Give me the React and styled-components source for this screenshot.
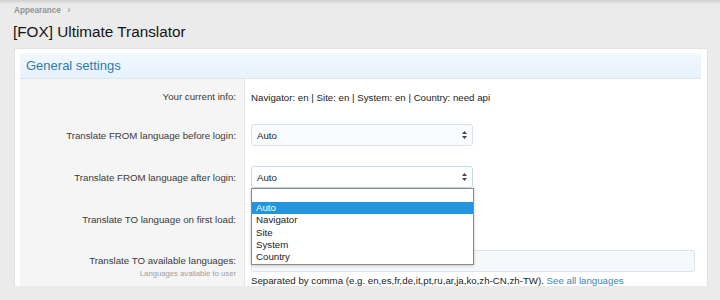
import React from "react";
import styled, { createGlobalStyle } from "styled-components";

const GlobalStyle = createGlobalStyle`
  html, body {
    margin: 0;
    padding: 0;
    background: #ebebeb;
    font-family: "Liberation Sans", Arial, sans-serif;
    color: #333;
  }
`;

const options = ["Auto", "Navigator", "Site", "System", "Country"];

const App = () => {
  return (
    <>
      <GlobalStyle />
      <Page>
        <Breadcrumb>
          Appearance <Chevron>›</Chevron>
        </Breadcrumb>
        <Title>[FOX] Ultimate Translator</Title>
        <Panel>
          <PanelHeader>General settings</PanelHeader>
          <FormBody>
            <Row $first>
              <Label>Your current info:</Label>
              <Value $text>Navigator: en | Site: en | System: en | Country: need api</Value>
            </Row>
            <Row>
              <Label>Translate FROM language before login:</Label>
              <Value>
                <Select>
                  <span>Auto</span>
                  <Arrows />
                </Select>
              </Value>
            </Row>
            <Row>
              <Label>Translate FROM language after login:</Label>
              <Value>
                <Select $focused>
                  <span>Auto</span>
                  <Arrows />
                </Select>
                <Dropdown>
                  <Option $empty />
                  {options.map((o, i) => (
                    <Option key={o} $active={i === 0}>
                      {o}
                    </Option>
                  ))}
                </Dropdown>
              </Value>
            </Row>
            <Row>
              <Label>Translate TO language on first load:</Label>
              <Value>
                <Select />
              </Value>
            </Row>
            <Row $top>
              <Label $top>
                Translate TO available languages:
                <Hint>Languages available to user</Hint>
              </Label>
              <Value>
                <TextInput>en</TextInput>
                <Explain>
                  Separated by comma (e.g. en,es,fr,de,it,pt,ru,ar,ja,ko,zh-CN,zh-TW).{" "}
                  <Link>See all languages</Link>
                </Explain>
              </Value>
            </Row>
          </FormBody>
        </Panel>
      </Page>
    </>
  );
};

const Arrows = () => (
  <svg width="5" height="8" viewBox="0 0 5 8">
    <path d="M2.5 0 L5 3 L0 3 Z" fill="#444" />
    <path d="M2.5 8 L5 5 L0 5 Z" fill="#444" />
  </svg>
);

export default App;

/* Styled Components */
const Page = styled.div`
  height: 300px;
  overflow: hidden;
  box-shadow: inset 0 4px 3px -2px rgba(0, 0, 0, 0.12);
  padding: 4px 12px 0 14px;
`;

const Breadcrumb = styled.div`
  font-size: 8.2px;
  font-weight: bold;
  color: #939393;
  height: 12px;
  line-height: 12px;
`;

const Chevron = styled.span`
  font-weight: normal;
  margin-left: 4px;
  font-size: 10px;
`;

const Title = styled.h1`
  margin: 0;
  margin-left: -1px;
  font-size: 15.3px;
  font-weight: normal;
  color: #141414;
  height: 32px;
  line-height: 31px;
`;

const Panel = styled.div`
  background: #fff;
  border: 1px solid #e2e2e2;
  border-bottom: none;
  padding: 4px 6px 0 5px;
`;

const PanelHeader = styled.h2`
  margin: 0;
  height: 25px;
  line-height: 25px;
  padding-left: 6px;
  font-size: 13px;
  font-weight: normal;
  color: #2b7bb5;
  background: linear-gradient(to bottom, #f2f8fe, #e7f2fc);
  border-bottom: 1px solid #dce6ee;
`;

const FormBody = styled.div`
  display: flex;
  flex-direction: column;
`;

const Row = styled.div`
  display: flex;
  align-items: ${(p) => (p.$top ? "flex-start" : "center")};
  min-height: ${(p) => (p.$first ? "35px" : "42px")};
`;

const Label = styled.div`
  box-sizing: border-box;
  width: 225px;
  flex: none;
  align-self: stretch;
  display: flex;
  flex-direction: column;
  justify-content: ${(p) => (p.$top ? "flex-start" : "center")};
  align-items: flex-end;
  padding-top: ${(p) => (p.$top ? "15px" : "0")};
  padding-right: 8px;
  background: #f5f5f5;
  border-right: 1px solid #e6e6e6;
  font-size: 9.7px;
  color: #3a3a3a;
  text-align: right;
`;

const Hint = styled.div`
  font-size: 7.7px;
  color: #a0a0a0;
  margin-top: 3px;
`;

const Value = styled.div`
  position: relative;
  flex: 1;
  padding: ${(p) => (p.$text ? "2px 6px 0" : "0 6px")};
  font-size: 9.7px;
  color: #222;
`;

const Select = styled.div`
  box-sizing: border-box;
  width: 222px;
  height: 22px;
  display: flex;
  align-items: center;
  justify-content: space-between;
  padding: 0 5px 0 5px;
  border: 1px solid ${(p) => (p.$focused ? "#bfe0e3" : "#dbe3ea")};
  border-radius: 3px;
  background: ${(p) => (p.$focused ? "#fff" : "#f9fbfd")};
  font-size: 9.7px;
  color: #222;
`;

const Dropdown = styled.div`
  position: absolute;
  left: 6px;
  top: calc(50% + 11px);
  z-index: 2;
  box-sizing: border-box;
  width: 223px;
  padding: 1px 0;
  background: #fff;
  border: 1px solid #8a8a8a;
  box-shadow: 0 1px 3px rgba(0, 0, 0, 0.2);
`;

const Option = styled.div`
  height: 12.2px;
  line-height: 12px;
  padding-left: 4px;
  font-size: 9.7px;
  background: ${(p) => (p.$active ? "#2494dc" : "transparent")};
  color: ${(p) => (p.$active ? "#fff" : "#222")};
`;

const TextInput = styled.div`
  box-sizing: border-box;
  margin-top: 10px;
  height: 22px;
  line-height: 20px;
  padding-left: 5px;
  border: 1px solid #dbe4ec;
  border-radius: 3px;
  background: #f6f9fc;
  font-size: 9.7px;
  color: #222;
`;

const Explain = styled.div`
  margin-top: 3px;
  font-size: 9.7px;
  color: #222;
`;

const Link = styled.a`
  color: #3a84ba;
  text-decoration: none;
`;
